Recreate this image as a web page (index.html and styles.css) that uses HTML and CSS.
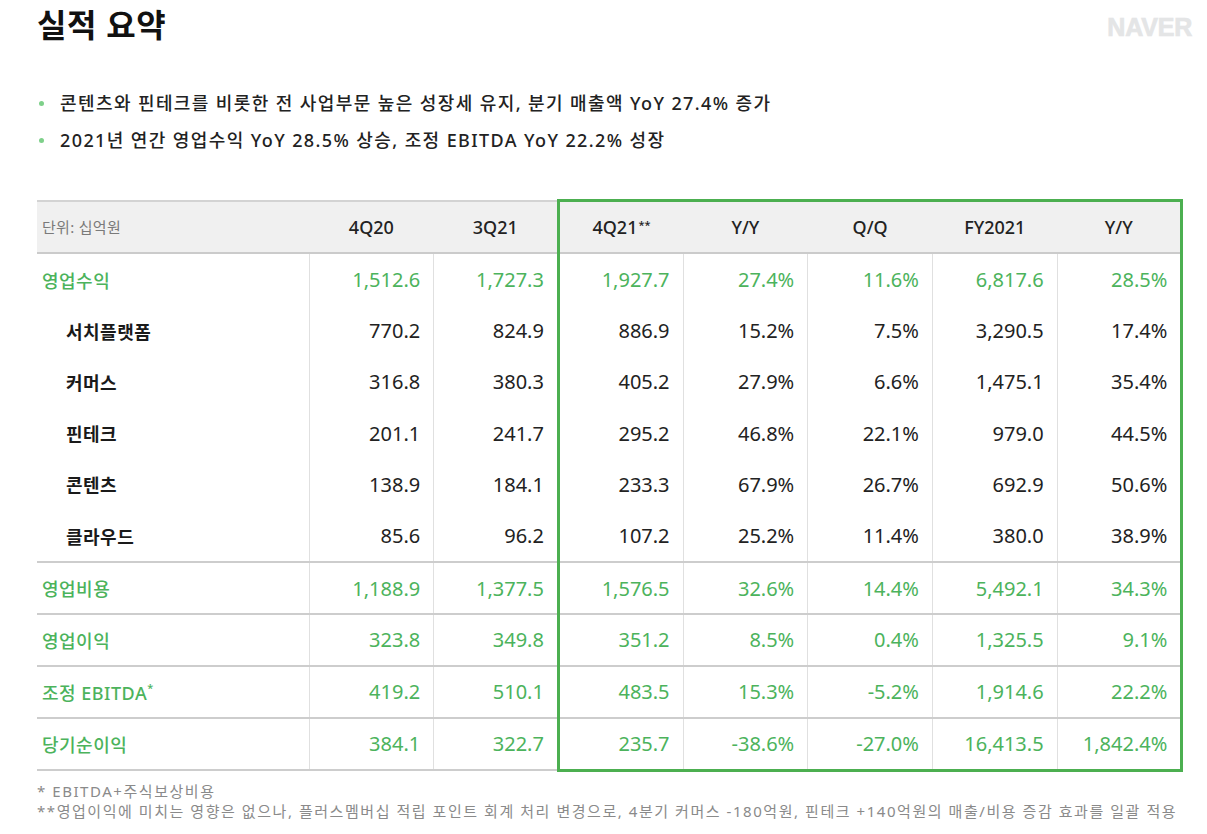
FILE: index.html
```html
<!DOCTYPE html>
<html lang="ko">
<head>
<meta charset="utf-8">
<link rel="stylesheet" href="styles.css">
</head>
<body>
<div class="page">
  <header class="top">
    <h1 class="title">실적 요약</h1>
    <div class="logo">NAVER</div>
  </header>
  <ul class="bullets">
    <li>콘텐츠와 핀테크를 비롯한 전 사업부문 높은 성장세 유지, 분기 매출액 YoY 27.4% 증가</li>
    <li>2021년 연간 영업수익 YoY 28.5% 상승, 조정 EBITDA YoY 22.2% 성장</li>
  </ul>
  <table class="perf">
    <colgroup>
      <col class="c-label"><col class="c-num"><col class="c-num"><col class="c-num"><col class="c-num"><col class="c-num"><col class="c-num"><col class="c-num">
    </colgroup>
    <thead>
      <tr>
        <th class="unit">단위: 십억원</th>
        <th>4Q20</th>
        <th>3Q21</th>
        <th class="gl gt">4Q21<span class="stars">**</span></th>
        <th class="gt">Y/Y</th>
        <th class="gt">Q/Q</th>
        <th class="gt">FY2021</th>
        <th class="gt gr">Y/Y</th>
      </tr>
    </thead>
    <tbody>
      <tr class="main">
        <td class="lbl">영업수익</td><td>1,512.6</td><td>1,727.3</td><td class="gl">1,927.7</td><td>27.4%</td><td>11.6%</td><td>6,817.6</td><td class="gr">28.5%</td>
      </tr>
      <tr class="sub">
        <td class="lbl">서치플랫폼</td><td>770.2</td><td>824.9</td><td class="gl">886.9</td><td>15.2%</td><td>7.5%</td><td>3,290.5</td><td class="gr">17.4%</td>
      </tr>
      <tr class="sub">
        <td class="lbl">커머스</td><td>316.8</td><td>380.3</td><td class="gl">405.2</td><td>27.9%</td><td>6.6%</td><td>1,475.1</td><td class="gr">35.4%</td>
      </tr>
      <tr class="sub">
        <td class="lbl">핀테크</td><td>201.1</td><td>241.7</td><td class="gl">295.2</td><td>46.8%</td><td>22.1%</td><td>979.0</td><td class="gr">44.5%</td>
      </tr>
      <tr class="sub">
        <td class="lbl">콘텐츠</td><td>138.9</td><td>184.1</td><td class="gl">233.3</td><td>67.9%</td><td>26.7%</td><td>692.9</td><td class="gr">50.6%</td>
      </tr>
      <tr class="sub">
        <td class="lbl">클라우드</td><td>85.6</td><td>96.2</td><td class="gl">107.2</td><td>25.2%</td><td>11.4%</td><td>380.0</td><td class="gr">38.9%</td>
      </tr>
      <tr class="main sep">
        <td class="lbl">영업비용</td><td>1,188.9</td><td>1,377.5</td><td class="gl">1,576.5</td><td>32.6%</td><td>14.4%</td><td>5,492.1</td><td class="gr">34.3%</td>
      </tr>
      <tr class="main sep">
        <td class="lbl">영업이익</td><td>323.8</td><td>349.8</td><td class="gl">351.2</td><td>8.5%</td><td>0.4%</td><td>1,325.5</td><td class="gr">9.1%</td>
      </tr>
      <tr class="main sep">
        <td class="lbl">조정 EBITDA<sup class="ast">*</sup></td><td>419.2</td><td>510.1</td><td class="gl">483.5</td><td>15.3%</td><td>-5.2%</td><td>1,914.6</td><td class="gr">22.2%</td>
      </tr>
      <tr class="main sep last">
        <td class="lbl">당기순이익</td><td>384.1</td><td>322.7</td><td class="gl">235.7</td><td>-38.6%</td><td>-27.0%</td><td>16,413.5</td><td class="gr">1,842.4%</td>
      </tr>
    </tbody>
  </table>
  <div class="notes">
    <p>* EBITDA+주식보상비용</p>
    <p>**영업이익에 미치는 영향은 없으나, 플러스멤버십 적립 포인트 회계 처리 변경으로, 4분기 커머스 -180억원, 핀테크 +140억원의 매출/비용 증감 효과를 일괄 적용</p>
  </div>
</div>
</body>
</html>
```

FILE: styles.css
```css
html, body {
  margin: 0;
  padding: 0;
  background: #ffffff;
}
body {
  font-family: "Noto Sans", "Noto Sans CJK KR", sans-serif;
  color: #222;
}
.page {
  width: 1207px;
  height: 834px;
  overflow: hidden;
}
.top {
  display: flex;
  justify-content: space-between;
  align-items: flex-start;
  padding: 0 15px 0 37px;
}
.title {
  margin: 0;
  padding-top: 3px;
  font-family: "Noto Sans CJK KR", sans-serif;
  font-size: 32px;
  line-height: 40px;
  font-weight: 700;
  color: #111;
  letter-spacing: 0.5px;
}
.logo {
  margin-top: 12px;
  font-family: "Liberation Sans", Arial, sans-serif;
  font-weight: 700;
  font-size: 25px;
  line-height: 30px;
  color: #e4e5e6;
  letter-spacing: -0.2px;
  -webkit-text-stroke: 0.7px #e4e5e6;
}
.bullets {
  list-style: none;
  margin: 42px 0 0 0;
  padding: 0 0 0 37px;
}
.bullets li {
  position: relative;
  padding-left: 23px;
  font-size: 18px;
  line-height: 37px;
  font-weight: 500;
  color: #222;
  letter-spacing: 1.4px;
}
.bullets li::before {
  content: "";
  position: absolute;
  left: 2px;
  top: 16px;
  width: 5px;
  height: 5px;
  border-radius: 50%;
  background: #7ed08a;
}
.perf {
  margin: 40px 0 0 37px;
  width: 1145px;
  border-collapse: collapse;
  table-layout: fixed;
}
.c-label { width: 272px; }
.c-num { width: 124.7px; }
.perf th {
  height: 50px;
  padding: 0;
  background: #f0f0f0;
  border-top: 2px solid #d3d3d3;
  border-bottom: 2px solid #cbcbcb;
  font-size: 18px;
  font-weight: 500;
  color: #222;
  text-align: center;
}
.perf th.unit {
  text-align: left;
  padding-left: 5px;
  font-size: 15px;
  font-weight: 400;
  color: #7a7a7a;
  letter-spacing: 0.3px;
}
.stars {
  font-size: 11px;
  vertical-align: 5px;
  margin-left: 1px;
}
.perf td {
  height: 51.2px;
  padding: 0 13px 0 0;
  text-align: right;
  font-size: 20px;
  font-weight: 400;
  color: #222;
  border-left: 1px solid #e0e0e0;
  border-right: 1px solid #e0e0e0;
}
.perf td.lbl {
  text-align: left;
  padding-left: 5px;
  border-left: none;
  font-size: 18px;
  font-weight: 500;
  letter-spacing: 0.5px;
}
.perf tr.sub td.lbl {
  padding-left: 29px;
  font-weight: 700;
  color: #1a1a1a;
}
.perf tr.main td {
  color: #4cb35c;
}
.perf tr.sep td {
  height: 49.9px;
  border-top: 2px solid #cdcdcd;
}
.perf tr.last td {
  border-bottom: 2px solid #cdcdcd;
}
.perf .gl { border-left: 3px solid #4caf50 !important; }
.perf .gr { border-right: 3px solid #4caf50 !important; }
.perf .gt { border-top: 3px solid #4caf50; }
.perf tr.last td.gl,
.perf tr.last td.gl ~ td { border-bottom: 3px solid #4caf50; }
.ast {
  font-size: 11px;
  vertical-align: 8px;
  line-height: 0;
}
.notes {
  margin: 9px 0 0 37px;
  color: #8a8a8a;
  font-size: 15px;
  line-height: 20px;
  letter-spacing: 1.55px;
}
.notes p {
  margin: 0;
}
```
